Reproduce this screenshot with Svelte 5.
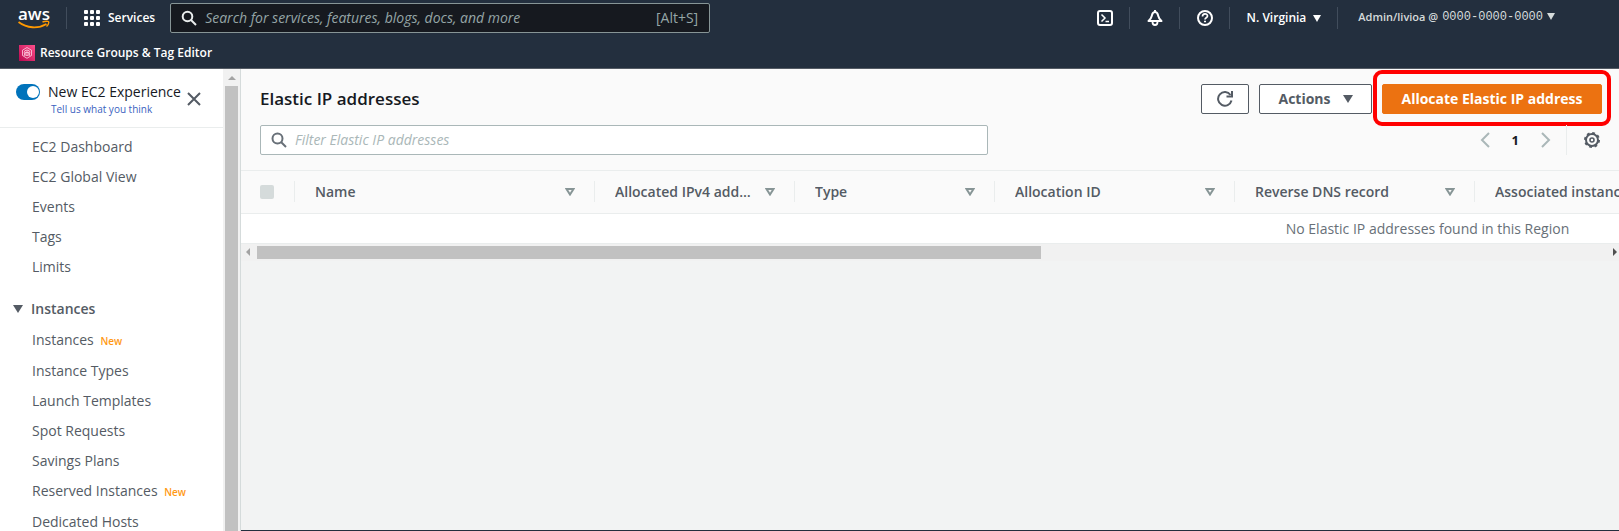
<script>
  let newExperience = true;
  let search = '';
  let filter = '';
  let instancesOpen = true;

  const topLinks = ['EC2 Dashboard', 'EC2 Global View', 'Events', 'Tags', 'Limits'];

  const instanceLinks = [
    { label: 'Instances', isNew: true },
    { label: 'Instance Types' },
    { label: 'Launch Templates' },
    { label: 'Spot Requests' },
    { label: 'Savings Plans' },
    { label: 'Reserved Instances', isNew: true },
    { label: 'Dedicated Hosts' }
  ];

  const columns = [
    { label: 'Name', width: 300 },
    { label: 'Allocated IPv4 address', width: 200 },
    { label: 'Type', width: 200 },
    { label: 'Allocation ID', width: 240 },
    { label: 'Reverse DNS record', width: 240 },
    { label: 'Associated instance ID', width: 1140 }
  ];
</script>

<div class="page">
  <header>
    <div class="nav-row">
      <a class="logo" href="#home" aria-label="AWS home">
        <span>aws</span>
        <svg width="32" height="9" viewBox="0 0 32 9" fill="none" stroke="#f90">
          <path d="M.5 2C9 8.500 20 9 28.500 4" stroke-width="1.900" />
          <path d="M24.500 2C27 1 30 1 30.500 1.600 31 2.500 30 5 28.500 6.500" stroke-width="1.400" />
        </svg>
      </a>
      <button class="services">
        <svg width="16" height="16" viewBox="0 0 16 16" fill="#fff">
          {#each [0, 6, 12] as y}
            {#each [0, 6, 12] as x}
              <rect {x} {y} width="4" height="4" rx="1" />
            {/each}
          {/each}
        </svg>
        Services
      </button>
      <label class="search">
        <svg width="16" height="16" viewBox="0 0 16 16" fill="none" stroke="#eaeded" stroke-width="2">
          <circle cx="6.500" cy="6.500" r="4.800" />
          <path d="M10 10l5 5" />
        </svg>
        <input type="text" aria-label="Search" placeholder="Search for services, features, blogs, docs, and more" bind:value={search} />
        <span>[Alt+S]</span>
      </label>
      <div class="tools">
        <button class="tool" aria-label="CloudShell">
          <svg width="16" height="16" viewBox="0 0 16 16" fill="none" stroke="#fff" stroke-width="2">
            <rect x="1" y="1" width="14" height="14" rx="2" />
            <path d="M4.500 4.500L8 8l-3.500 3.500M8.500 11.500h3.500" stroke-width="1.500" />
          </svg>
        </button>
        <button class="tool" aria-label="Notifications">
          <svg width="16" height="16" viewBox="0 0 16 16" fill="none" stroke="#fff" stroke-width="2" stroke-linejoin="round">
            <path d="M8 0v2M1.500 11C4.500 8.500 4.500 7 5 5 5.500 3.200 6.500 2 8 2s2.500 1.200 3 3c.5 2 .5 3.500 3.500 6z" />
            <path d="M5.500 12c0 4 5 4 5 0" stroke-width="1.800" />
          </svg>
        </button>
        <button class="tool" aria-label="Help">
          <svg width="16" height="16" viewBox="0 0 16 16" fill="none" stroke="#fff" stroke-width="2">
            <circle cx="8" cy="8" r="7" />
            <path d="M5.500 6.500C5.500 3 10.500 3.200 10.500 6c0 1.700-2.500 1.800-2.500 3.500" stroke-width="1.700" />
            <path d="M8 10.700v1.600" />
          </svg>
        </button>
        <button class="tool region">N. Virginia <i class="caret"></i></button>
        <button class="tool account">
          Admin/livioa @ <span>0000-0000-0000</span> <i class="caret"></i>
        </button>
      </div>
    </div>
    <a class="favorite" href="#resource-groups">
      <svg width="16" height="16" viewBox="0 0 16 16">
        <defs>
          <linearGradient id="pink" x1="0" y1="1" x2="1" y2="0">
            <stop offset="0" stop-color="#b8084f" />
            <stop offset="1" stop-color="#ff4f8b" />
          </linearGradient>
        </defs>
        <rect width="16" height="16" fill="url(#pink)" />
        <g fill="none" stroke="#ffd3e4" stroke-width=".8">
          <path d="M8 2.500l4.500 2.700v5.300L8 13.300l-4.500-2.800V5.200z" />
          <circle cx="8" cy="7.800" r="2.800" />
          <path d="M8 5.500v5M6 7.500h4M5 11l1.500-3M11 11L9.500 8" />
        </g>
      </svg>
      Resource Groups &amp; Tag Editor
    </a>
  </header>

  <div class="body">
    <aside>
      <div class="side">
        <div class="experience">
          <input id="experience" type="checkbox" role="switch" bind:checked={newExperience} />
          <div class="experience-text">
            <label for="experience">New EC2 Experience</label>
            <a href="#feedback">Tell us what you think</a>
          </div>
          <button class="close" aria-label="Close navigation">
            <svg width="14" height="14" viewBox="0 0 14 14" stroke="#545b64" stroke-width="2">
              <path d="M1 1l12 12M13 1L1 13" />
            </svg>
          </button>
        </div>
        <nav>
          <ul>
            {#each topLinks as label}
              <li><a href="#nav">{label}</a></li>
            {/each}
          </ul>
          <button class="section" aria-expanded={instancesOpen} on:click={() => (instancesOpen = !instancesOpen)}>
            <i class="caret"></i>Instances
          </button>
          {#if instancesOpen}
            <ul>
              {#each instanceLinks as link}
                <li class:with-badge={link.isNew}>
                  <a href="#nav">{link.label}</a>
                  {#if link.isNew}<span class="new">New</span>{/if}
                </li>
              {/each}
            </ul>
          {/if}
        </nav>
      </div>
      <div class="scroll-y">
        <i class="arrow-up"></i>
        <div class="thumb"></div>
      </div>
    </aside>

    <main>
      <div class="panel-head">
        <div class="title-row">
          <h1>Elastic IP addresses</h1>
          <button class="btn refresh" aria-label="Refresh">
            <svg width="16" height="16" viewBox="0 0 16 16" fill="none" stroke="#545b64" stroke-width="2">
              <path d="M14.500 9.500A6.800 6.800 0 1 1 13.500 4" />
              <path d="M15 0v5.500H9.500" />
            </svg>
          </button>
          <button class="btn actions">Actions <i class="caret"></i></button>
          <div class="highlight">
            <button class="btn primary">Allocate Elastic IP address</button>
          </div>
        </div>
        <div class="filter-row">
          <label class="filter">
            <svg width="16" height="16" viewBox="0 0 16 16" fill="none" stroke="#687078" stroke-width="2">
              <circle cx="6.500" cy="6.500" r="5" />
              <path d="M10 10l5 5" />
            </svg>
            <input type="text" aria-label="Filter" placeholder="Filter Elastic IP addresses" bind:value={filter} />
          </label>
          <div class="pager">
            <button aria-label="Previous page">
              <svg width="10" height="16" viewBox="0 0 10 16" fill="none" stroke="#aab7b8" stroke-width="2"><path d="M9 1L2 8l7 7" /></svg>
            </button>
            <button class="current">1</button>
            <button aria-label="Next page">
              <svg width="10" height="16" viewBox="0 0 10 16" fill="none" stroke="#aab7b8" stroke-width="2"><path d="M1 1l7 7-7 7" /></svg>
            </button>
          </div>
          <button class="settings" aria-label="Preferences">
            <svg width="16" height="16" viewBox="0 0 16 16" fill="none" stroke="#545b64" stroke-width="2">
              <circle cx="8" cy="8" r="6" />
              <circle cx="8" cy="8" r="7" stroke-dasharray="2.750 2.750" />
              <circle cx="8" cy="8" r="2" stroke-width="1.600" />
            </svg>
          </button>
        </div>
      </div>

      <div class="table-wrap">
        <table>
          <colgroup>
            <col class="check-col" />
            {#each columns as column}
              <col style="width: {column.width}px" />
            {/each}
          </colgroup>
          <thead>
            <tr>
              <th><input type="checkbox" aria-label="Select all" disabled /></th>
              {#each columns as column}
                <th>
                  <button class="sort">
                    <span>{column.label}</span>
                    <svg width="10" height="8" viewBox="0 0 10 8" fill="none" stroke="#879596" stroke-width="2"><path d="M1.500 1h7L5 6.500z" /></svg>
                  </button>
                </th>
              {/each}
            </tr>
          </thead>
          <tbody>
            <tr>
              <td colspan={columns.length + 1}>No Elastic IP addresses found in this Region</td>
            </tr>
          </tbody>
        </table>
      </div>
      <div class="scroll-x">
        <i class="arrow-left"></i>
        <div class="track"><div class="thumb"></div></div>
        <i class="arrow-right"></i>
      </div>
    </main>
  </div>
</div>

<style>
  :global(body) {
    margin: 0;
    overflow: hidden;
  }

  .page {
    display: flex;
    flex-direction: column;
    height: 100vh;
    font: 14px/22px "Open Sans", "Noto Sans", sans-serif;
    color: #545b64;
    background: #f2f3f3;
  }

  .page :global(*) {
    box-sizing: border-box;
  }

  button, input {
    font: inherit;
    color: inherit;
    background: none;
    border: 0;
    margin: 0;
    padding: 0;
    outline: 0;
  }

  button { cursor: pointer; }
  a { color: inherit; text-decoration: none; }
  svg { display: block; flex: none; }

  .caret {
    display: inline-block;
    border: 4px solid transparent;
    border-top: 7px solid currentColor;
    border-bottom: 0;
  }

  /* top navigation */
  header {
    flex: none;
    background: #232f3e;
    border-bottom: 1px solid #545b64;
    color: #fff;
    font-size: 12px;
    font-weight: 600;
  }

  .nav-row {
    display: flex;
    align-items: center;
    height: 36px;
    padding-left: 18px;
  }

  .logo {
    padding-right: 16px;
    border-right: 1px solid #414d5c;
  }

  .logo span {
    display: block;
    font-size: 17px;
    line-height: 13px;
  }

  .services {
    display: flex;
    align-items: center;
    gap: 8px;
    padding: 0 15px 0 17px;
  }

  .search {
    display: flex;
    align-items: center;
    flex: 0 0 540px;
    height: 30px;
    padding: 0 11px 0 10px;
    gap: 8px;
    background: #16191f;
    border: 1px solid #879596;
    border-radius: 2px;
    color: #95a5a6;
    font-size: 14px;
    font-weight: 400;
  }

  .search input, .filter input {
    flex: 1;
    min-width: 0;
  }

  .search input::placeholder {
    color: #95a5a6;
    font-style: italic;
    opacity: 1;
  }

  .tools {
    display: flex;
    margin-left: auto;
    margin-right: 46px;
  }

  .tool {
    display: flex;
    align-items: center;
    height: 22px;
    padding: 0 16px 0 17px;
    border-left: 1px solid #414d5c;
  }

  .tool:first-child { border-left: 0; }

  .region { gap: 7px; }

  .account {
    gap: 4px;
    padding: 0 18px 3px 20px;
    font-size: 11px;
    color: #d5dbdb;
  }

  .account span {
    font: 12px/22px "Liberation Mono", monospace;
  }

  .favorite {
    display: flex;
    align-items: center;
    gap: 5px;
    height: 32px;
    padding-top: 2px;
    padding-left: 19px;
  }

  .body {
    display: flex;
    flex: 1;
    min-height: 0;
  }

  /* side navigation */
  aside {
    display: flex;
    flex: 0 0 241px;
    overflow: hidden;
    background: #fff;
    border-right: 1px solid #d5dbdb;
  }

  .side { flex: 1; }

  .experience {
    display: flex;
    align-items: flex-start;
    height: 59px;
    padding: 15px 22px 0 16px;
    border-bottom: 1px solid #eaeded;
  }

  .experience input {
    appearance: none;
    width: 24px;
    height: 16px;
    padding: 2px;
    border-radius: 8px;
    background: #879596;
  }

  .experience input::before {
    content: "";
    display: block;
    width: 12px;
    height: 12px;
    border-radius: 50%;
    background: #fff;
  }

  .experience input:checked { background: #0073bb; }
  .experience input:checked::before { margin-left: 9px; }

  .experience-text {
    display: flex;
    flex: 1;
    flex-direction: column;
    padding-left: 8px;
    color: #16191f;
    line-height: 16px;
    white-space: nowrap;
  }

  .experience-text a {
    padding-left: 3px;
    font-size: 10px;
    line-height: 18px;
    color: #3b5fc0;
  }

  .close { padding-top: 8px; }

  ul {
    list-style: none;
    margin: 0;
    padding: 0;
  }

  nav { padding-top: 8px; }

  li {
    height: 30px;
    padding-left: 32px;
    white-space: nowrap;
  }

  .with-badge { height: 31px; }

  .new {
    margin-left: 3px;
    font-size: 10px;
    font-weight: 600;
    color: #ff9914;
  }

  .section {
    display: flex;
    align-items: center;
    gap: 8px;
    padding: 12px 0 9px 13px;
    font-weight: 600;
  }

  .section .caret {
    border-width: 8px 5px 0;
  }

  .scroll-y {
    display: flex;
    flex-direction: column;
    align-items: center;
    width: 17px;
    padding-top: 7px;
    background: #f1f1f1;
  }

  .scroll-y .thumb {
    flex: 1;
    width: 13px;
    margin-top: 6px;
    background: #c1c1c1;
  }

  .arrow-up {
    border: 4px solid transparent;
    border-bottom-color: #a3a3a3;
    border-top: 0;
  }

  /* content */
  main {
    flex: 1;
    min-width: 0;
    border-bottom: 1px solid #232f3e;
  }

  .panel-head {
    height: 102px;
    padding: 15px 17px 0 19px;
    background: #fafafa;
    border-bottom: 1px solid #eaeded;
  }

  .title-row, .filter-row {
    display: flex;
    align-items: center;
    height: 30px;
  }

  .title-row { margin-bottom: 11px; }

  h1 {
    flex: 1;
    margin: 0;
    font-size: 17px;
    font-weight: 600;
    line-height: 22px;
    color: #16191f;
  }

  .btn {
    display: flex;
    align-items: center;
    justify-content: center;
    height: 30px;
    border: 1px solid #545b64;
    border-radius: 2px;
    background: #fff;
    font-weight: 700;
  }

  .refresh {
    width: 48px;
    margin-right: 10px;
  }

  .actions {
    width: 113px;
    gap: 12px;
  }

  .actions .caret { border-width: 8px 5px 0; }

  .highlight {
    margin: -14px -9px -12px 1px;
    padding: 10px 5px 8px;
    border: 4px solid #f00;
    border-radius: 9px;
  }

  .primary {
    width: 220px;
    background: #ec7211;
    border-color: #ec7211;
    color: #fff;
    white-space: nowrap;
  }

  .filter {
    display: flex;
    align-items: center;
    flex: 0 1 728px;
    height: 30px;
    padding: 0 10px;
    gap: 8px;
    background: #fff;
    border: 1px solid #aab7b8;
    border-radius: 2px;
  }

  .filter input::placeholder {
    color: #aab7b8;
    font-style: italic;
    opacity: 1;
  }

  .pager {
    display: flex;
    align-items: center;
    gap: 22px;
    margin-left: auto;
    padding-right: 15px;
    border-right: 1px solid #eaeded;
    height: 30px;
  }

  .current {
    font-size: 13px;
    font-weight: 700;
    color: #16191f;
  }

  .settings { padding: 0 2px 0 17px; }

  .table-wrap { overflow: hidden; }

  table {
    width: 2373px;
    table-layout: fixed;
    border-collapse: collapse;
    background: #fff;
  }

  .check-col { width: 53px; }

  thead tr {
    height: 42px;
    background: #fafafa;
    border-bottom: 1px solid #eaeded;
  }

  th {
    padding: 0;
    text-align: left;
  }

  th input {
    appearance: none;
    display: block;
    width: 14px;
    height: 14px;
    margin-left: 19px;
    border-radius: 2px;
    background: #d5dbdb;
  }

  .sort {
    display: flex;
    align-items: center;
    gap: 12px;
    width: 100%;
    height: 21px;
    padding: 0 19px 0 20px;
    border-left: 1px solid #eaeded;
    font-weight: 600;
    text-align: left;
  }

  .sort span {
    flex: 1;
    overflow: hidden;
    text-overflow: ellipsis;
    white-space: nowrap;
  }

  td {
    height: 30px;
    padding: 2px 0 0;
    border-bottom: 1px solid #eaeded;
    text-align: center;
    color: #687078;
  }

  .scroll-x {
    display: flex;
    align-items: center;
    height: 17px;
    padding: 0 2px 0 5px;
    background: #f1f1f1;
  }

  .track {
    flex: 1;
    margin: 0 4px 0 7px;
  }

  .scroll-x .thumb {
    width: 58%;
    height: 13px;
    background: #c1c1c1;
  }

  .arrow-left, .arrow-right {
    border: 4px solid transparent;
  }

  .arrow-left {
    border-right-color: #a3a3a3;
    border-left: 0;
  }

  .arrow-right {
    border-left-color: #505050;
    border-right: 0;
  }
</style>
